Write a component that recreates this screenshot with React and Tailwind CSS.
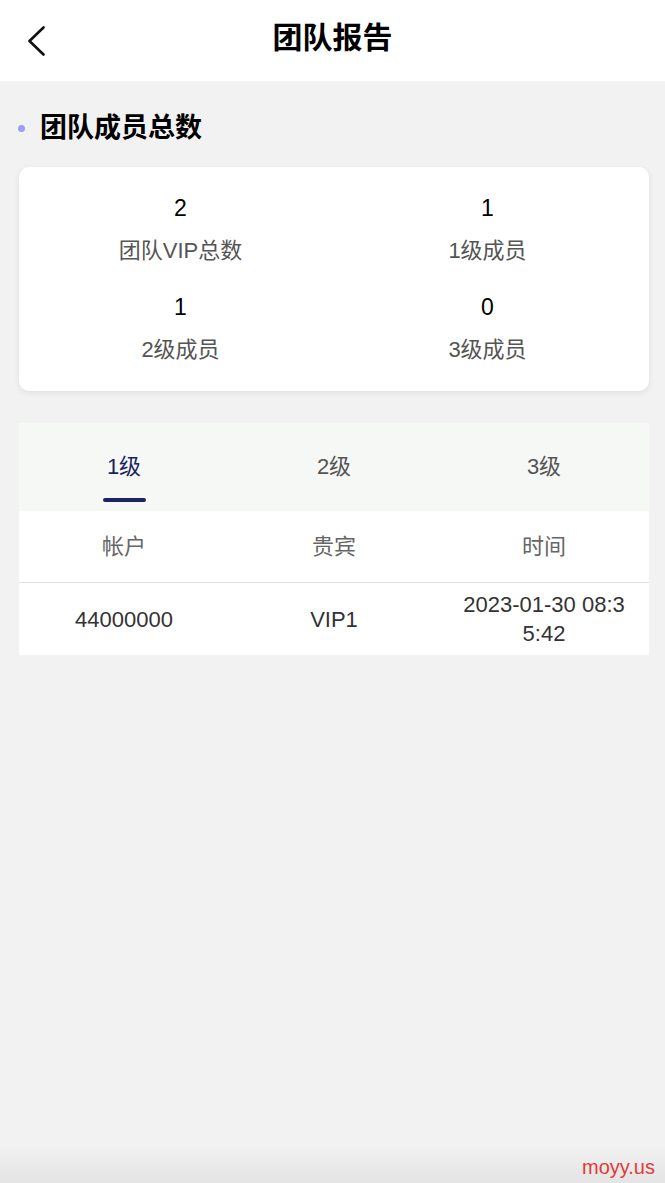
import { useState } from "react";

const FONT = {
  fontFamily: '"Liberation Sans", "Noto Sans CJK SC", sans-serif',
};

const STATS = [
  { value: 2, label: "团队VIP总数" },
  { value: 1, label: "1级成员" },
  { value: 1, label: "2级成员" },
  { value: 0, label: "3级成员" },
];

const TABS = ["1级", "2级", "3级"];

const ROWS = [{ account: "44000000", vip: "VIP1", time: "2023-01-30 08:35:42" }];

function App() {
  const [tab, setTab] = useState(0);

  return (
    <div className="min-h-screen bg-[#f2f2f2] text-black" style={FONT}>
      {/* Header */}
      <div className="h-[81px] bg-white flex items-center relative">
        <button className="pl-[27px] pr-4 h-full flex items-center">
          <svg width="19" height="30" viewBox="0 0 19 30" fill="none">
            <polyline
              points="16.5,1.5 2.5,15 16.5,28.5"
              stroke="#111"
              strokeWidth="2.6"
              strokeLinecap="round"
              strokeLinejoin="round"
            />
          </svg>
        </button>
        <h1 className="absolute left-1/2 -translate-x-1/2 text-[30px] font-bold leading-none pb-[6px]">
          团队报告
        </h1>
      </div>

      {/* Section title */}
      <div className="flex items-center pl-[18px] pt-[32px] pb-[24px]">
        <span className="w-[7px] h-[7px] rounded-full bg-[#9d9cf6]" />
        <span className="ml-[15px] text-[27px] font-bold leading-[30px]">团队成员总数</span>
      </div>

      {/* Stats card */}
      <div className="ml-[19px] mr-[16px] bg-white rounded-[10px] shadow-[0_2px_6px_rgba(0,0,0,0.08)] px-[8px] py-[26px] grid grid-cols-2 gap-y-[26px]">
        {STATS.map((s, i) => (
          <div key={i} className="flex flex-col items-center">
            <div className="text-[23px] leading-[30px] text-black">{s.value}</div>
            <div className="mt-[13px] text-[22px] leading-[30px] text-[#555]">{s.label}</div>
          </div>
        ))}
      </div>

      {/* Level tabs + table */}
      <div className="ml-[19px] mr-[16px] mt-[32px]">
        <div className="bg-[#f5f8f5] h-[88px] grid grid-cols-3">
          {TABS.map((t, i) => (
            <button
              key={t}
              onClick={() => setTab(i)}
              className={`flex flex-col items-center pt-[29px] text-[22px] leading-[30px] ${
                i === tab ? "text-[#1b2463]" : "text-[#555]"
              }`}
            >
              <span>{t}</span>
              <span
                className={`mt-[16px] h-[4px] w-[43px] rounded-full ${
                  i === tab ? "bg-[#1b2463]" : "bg-transparent"
                }`}
              />
            </button>
          ))}
        </div>

        <div className="bg-white grid grid-cols-3 h-[72px] border-b border-[#e0e0e0] text-[22px] text-[#666]">
          <div className="flex items-center justify-center">帐户</div>
          <div className="flex items-center justify-center">贵宾</div>
          <div className="flex items-center justify-center">时间</div>
        </div>

        {ROWS.map((r) => (
          <div
            key={r.account}
            className="bg-white grid grid-cols-3 min-h-[72px] text-[22px] leading-[29px] text-[#333]"
          >
            <div className="flex items-center justify-center">{r.account}</div>
            <div className="flex items-center justify-center">{r.vip}</div>
            <div className="flex items-center justify-center text-center px-[22px] break-all">
              {r.time}
            </div>
          </div>
        ))}
      </div>

      {/* bottom bar */}
      <div className="fixed bottom-0 left-0 right-0 h-[40px] bg-gradient-to-b from-[#f2f2f2] to-[#e4e4e4] flex items-end justify-end pr-[10px] pb-[4px]">
        <span className="text-[20px] leading-[24px] text-[#e23a3a]">moyy.us</span>
      </div>
    </div>
  );
}

export default App;
